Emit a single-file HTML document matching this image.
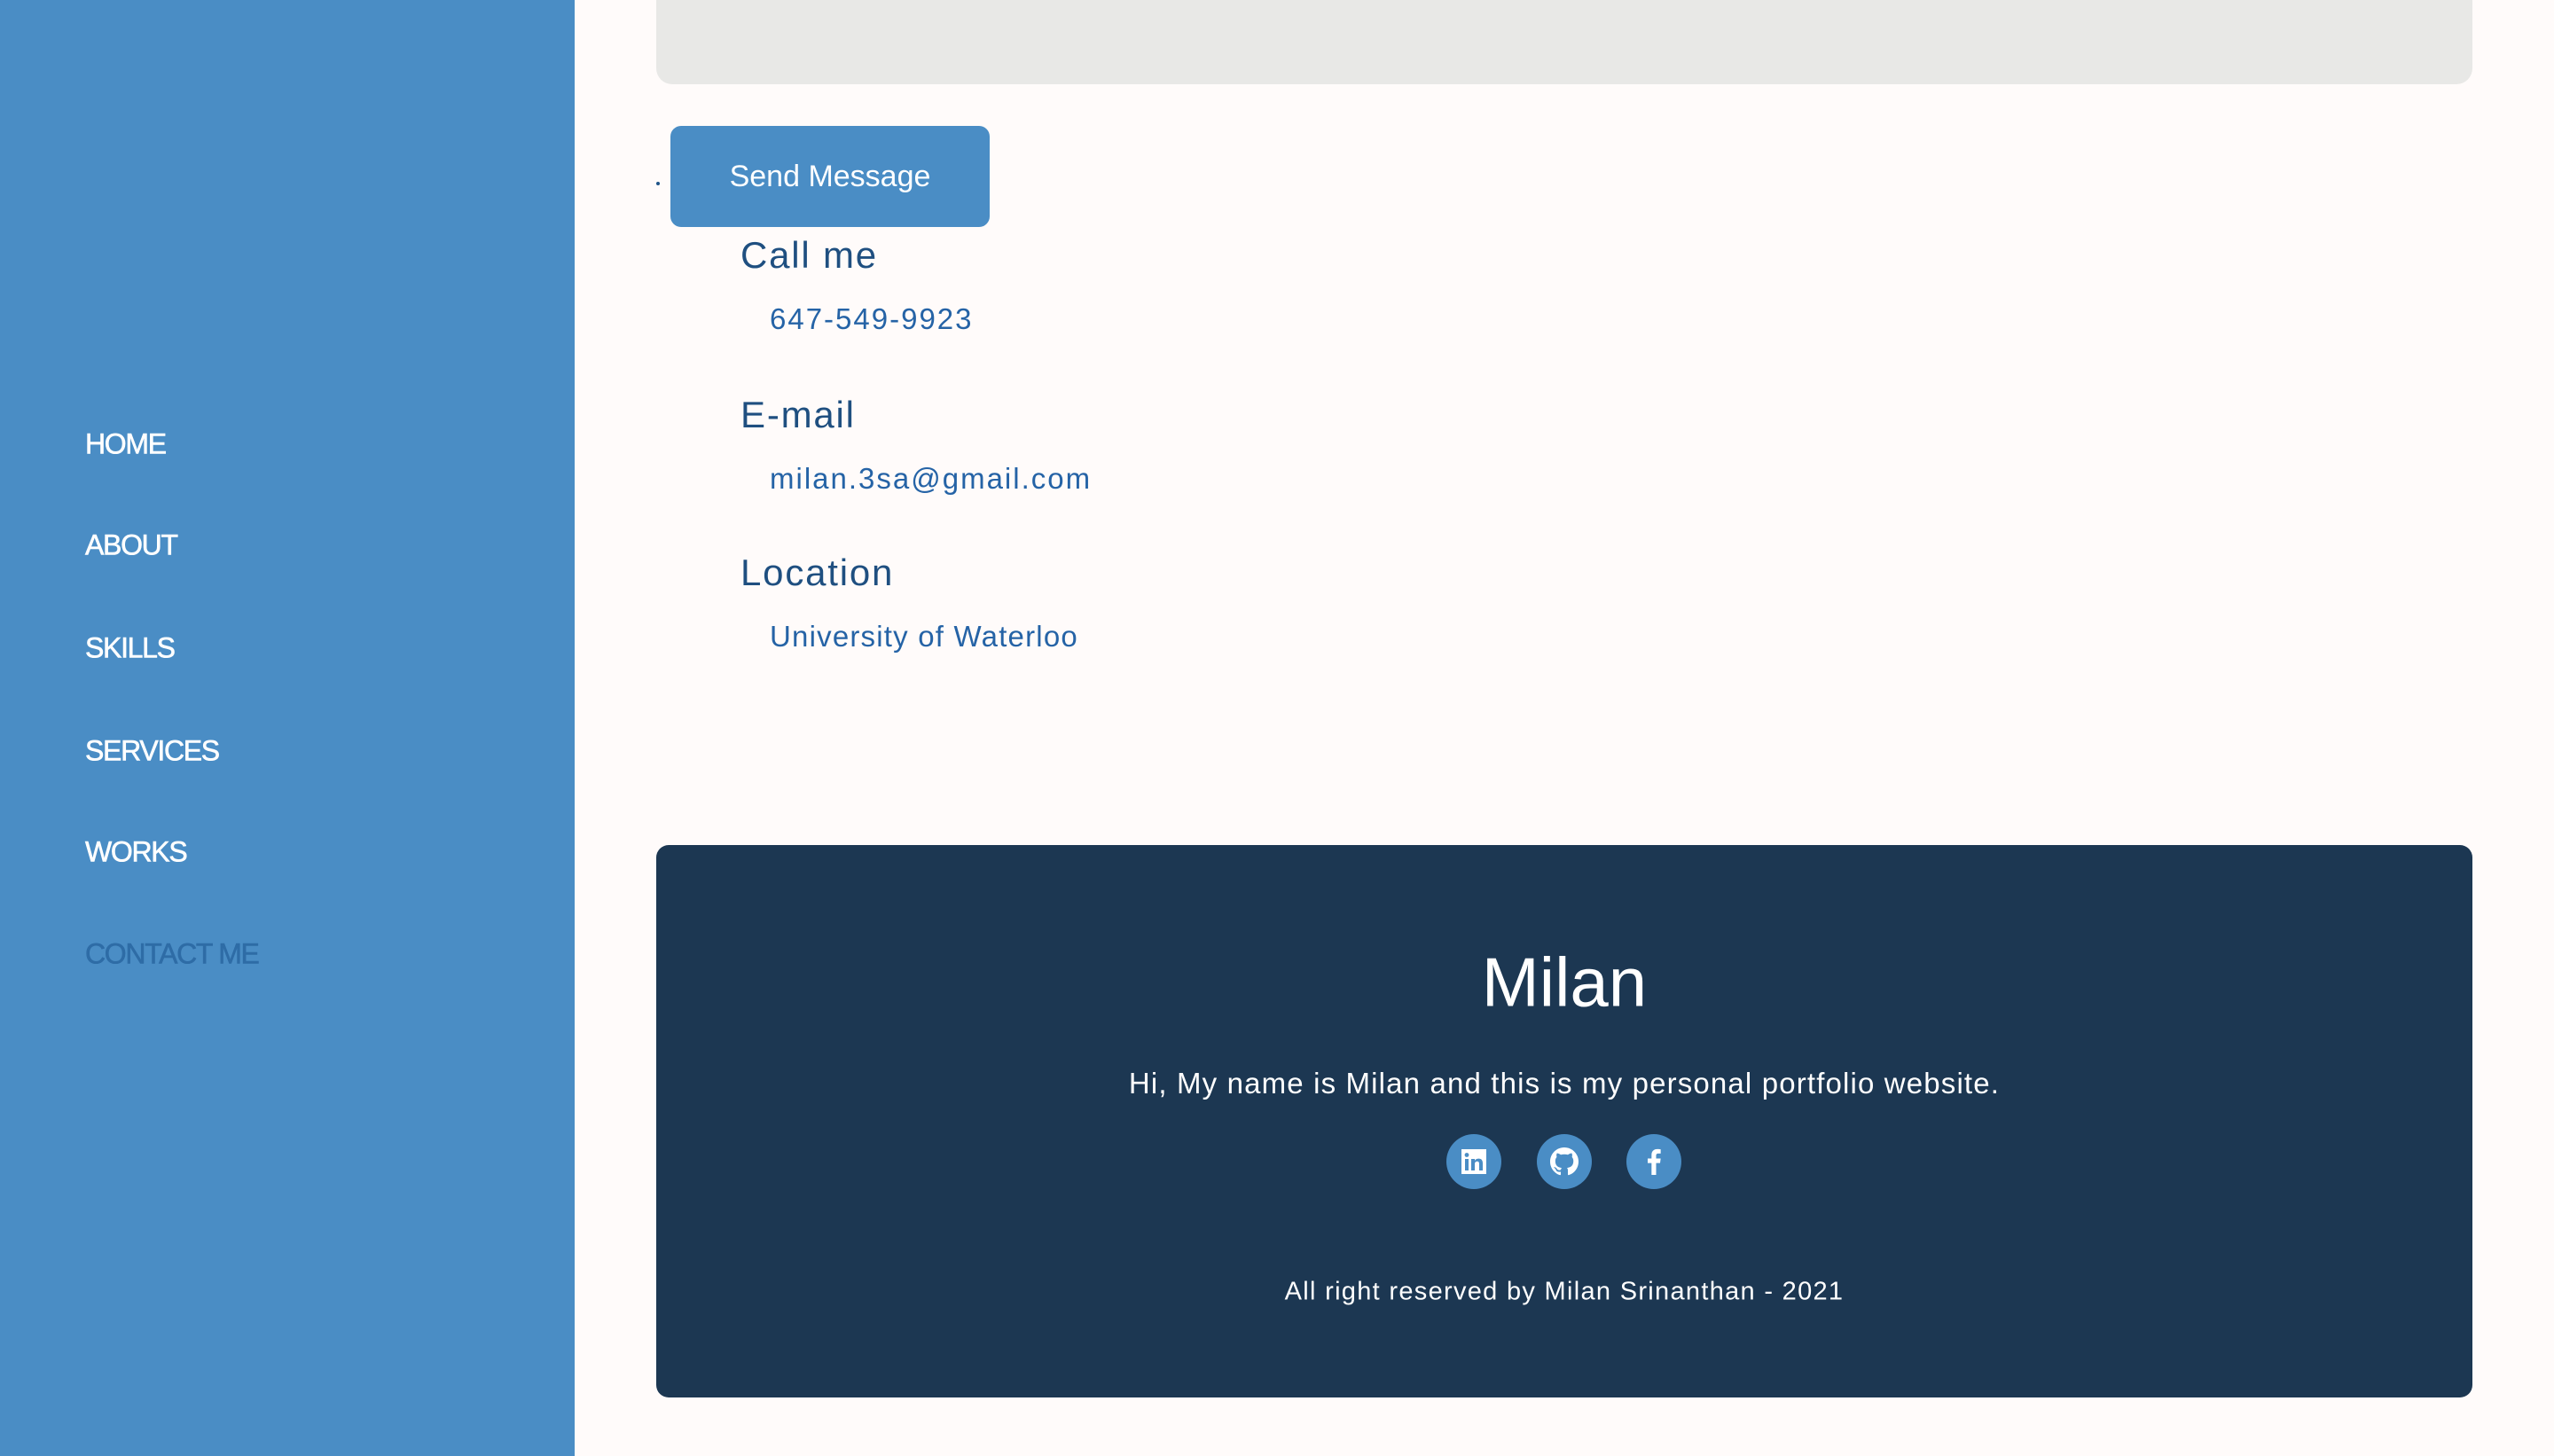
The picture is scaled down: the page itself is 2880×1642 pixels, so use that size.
<!DOCTYPE html>
<html><head><meta charset="utf-8"><style>
*{margin:0;padding:0;box-sizing:border-box}
body{width:2880px;height:1642px;background:#fffbfa;font-family:"Liberation Sans",sans-serif;position:relative;overflow:hidden}
.side{position:absolute;left:0;top:0;width:648px;height:1642px;background:#4a8dc5}
.nav{position:absolute;left:96px;color:#fff;font-size:32px;letter-spacing:-1.3px;transform:translateY(-50%);-webkit-text-stroke:0.6px currentColor}
.ta{position:absolute;left:740px;top:-20px;width:2048px;height:115px;background:#e8e8e6;border-radius:0 0 18px 18px}
.btn{position:absolute;left:756px;top:142px;width:360px;height:114px;background:#4a8dc5;border-radius:12px;color:#fff;font-size:34px;display:flex;align-items:center;justify-content:center}
.dot{position:absolute;left:740px;top:205px;width:4px;height:4px;border-radius:2px;background:#1f5488}
.h{position:absolute;left:835px;color:#1f4f80;font-size:42px;letter-spacing:1.8px;transform:translateY(-50%)}
.t{position:absolute;left:868px;color:#2563a6;font-size:33px;letter-spacing:2px;transform:translateY(-50%)}
.foot{position:absolute;left:740px;top:953px;width:2048px;height:623px;background:#1c3752;border-radius:14px;color:#fff;text-align:center}
.ic{position:absolute;top:1279px;width:62px;height:62px;border-radius:50%;background:#4a8dc5;display:flex;align-items:center;justify-content:center}
</style></head><body>
<div class="side">
<div class="nav" style="top:501px">HOME</div>
<div class="nav" style="top:615px">ABOUT</div>
<div class="nav" style="top:731px">SKILLS</div>
<div class="nav" style="top:847px">SERVICES</div>
<div class="nav" style="top:961px">WORKS</div>
<div class="nav" style="top:1076px;color:#2e6ca6">CONTACT ME</div>
</div>
<div class="ta"></div>
<div class="dot"></div>
<div class="btn">Send Message</div>
<div class="h" style="top:288px">Call me</div>
<div class="t" style="top:360px">647-549-9923</div>
<div class="h" style="top:468px">E-mail</div>
<div class="t" style="top:540px">milan.3sa@gmail.com</div>
<div class="h" style="top:646px">Location</div>
<div class="t" style="top:718px;letter-spacing:1.2px">University of Waterloo</div>
<div class="foot">
<div style="position:absolute;left:0;right:0;top:155px;transform:translateY(-50%);font-size:78px">Milan</div>
<div style="position:absolute;left:0;right:0;top:269px;transform:translateY(-50%);font-size:33px;letter-spacing:1.15px">Hi, My name is Milan and this is my personal portfolio website.</div>
<div style="position:absolute;left:0;right:0;top:504px;transform:translateY(-50%);font-size:29px;letter-spacing:1.3px">All right reserved by Milan Srinanthan - 2021</div>
</div>
<div class="ic" style="left:1631px"><svg width="28" height="28" viewBox="0 0 28 28"><rect width="28" height="28" fill="#fff"/><rect x="4" y="11" width="4" height="13" fill="#4a8dc5"/><circle cx="6" cy="6.5" r="2.4" fill="#4a8dc5"/><path d="M11 11h4v2c1-2 3-2.4 4.5-2.4 3 0 4.5 2 4.5 5.4V24h-4v-7.5c0-1.8-.8-2.7-2.2-2.7S15 14.800 15 16.500V24h-4z" fill="#4a8dc5"/></svg></div>
<div class="ic" style="left:1733px"><svg width="32" height="32" viewBox="0 0 16 16"><path fill="#fff" d="M8 0C3.580 0 0 3.580 0 8c0 3.54 2.29 6.53 5.47 7.59.4.07.55-.17.55-.38 0-.19-.01-.82-.01-1.49-2.010.37-2.530-.49-2.690-.94-.09-.23-.48-.94-.82-1.130-.28-.15-.68-.52-.01-.53.63-.01 1.080.58 1.230.82.72 1.210 1.870.87 2.330.66.07-.52.28-.87.51-1.070-1.780-.2-3.640-.89-3.640-3.950 0-.87.31-1.590.82-2.150-.08-.2-.36-1.020.08-2.120 0 0 .67-.21 2.2.82.64-.18 1.320-.27 2-.27.68 0 1.360.09 2 .27 1.530-1.040 2.2-.82 2.2-.82.44 1.1.16 1.920.08 2.120.51.56.82 1.270.82 2.150 0 3.070-1.870 3.750-3.650 3.950.29.25.54.73.54 1.480 0 1.070-.01 1.930-.01 2.2 0 .21.15.46.55.38A8.013 8.013 0 0016 8c0-4.420-3.580-8-8-8z"/></svg></div>
<div class="ic" style="left:1834px"><svg width="20" height="30" viewBox="0 0 10 18"><path fill="#fff" d="M6.5 18V10h2.7l.4-3.1H6.5V5c0-.9.3-1.5 1.5-1.5h1.6V.7C9.3.6 8.4.5 7.3.5 5 .5 3.4 1.9 3.4 4.5v2.4H.8V10h2.6v8z"/></svg></div>
</body></html>
